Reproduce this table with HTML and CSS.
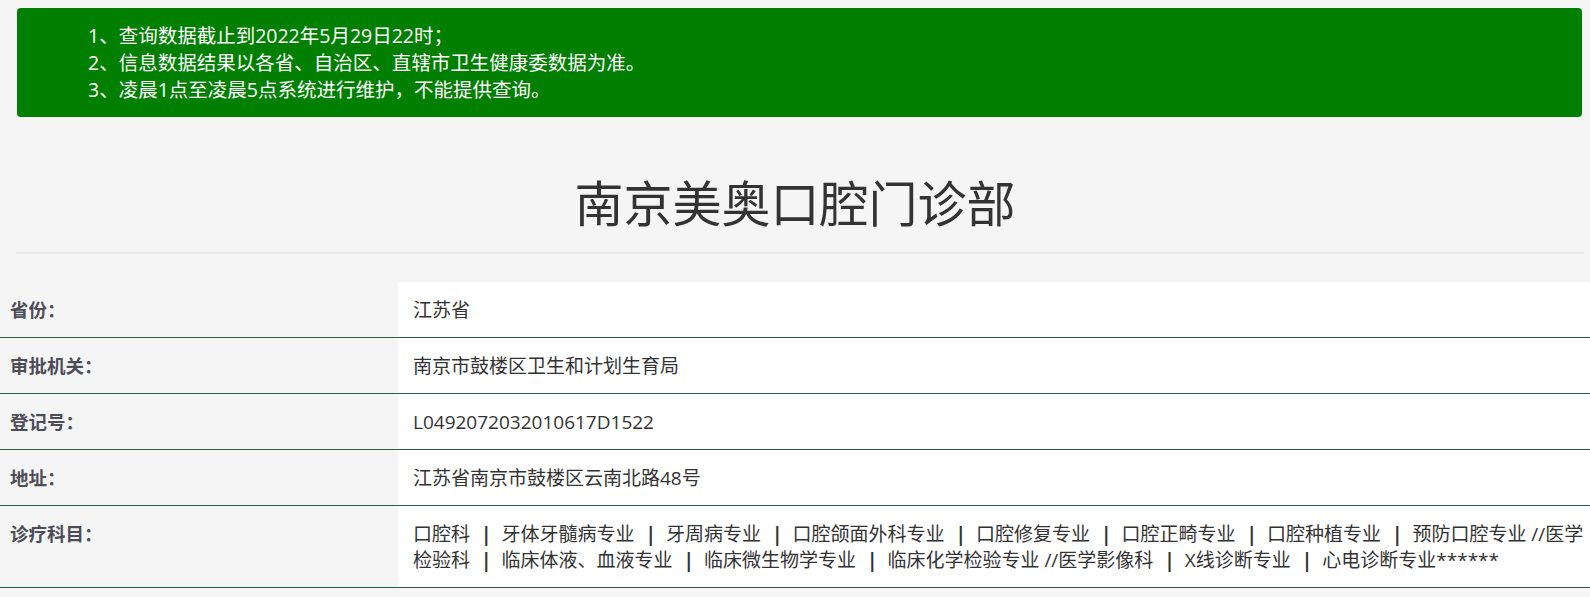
FILE: index.html
```html
<!DOCTYPE html>
<html lang="zh-CN">
<head>
<meta charset="utf-8">
<title>南京美奥口腔门诊部</title>
<link rel="stylesheet" href="styles.css">
</head>
<body>
<div class="notice">
  <div class="notice-line">1、查询数据截止到2022年5月29日22时；</div>
  <div class="notice-line">2、信息数据结果以各省、自治区、直辖市卫生健康委数据为准。</div>
  <div class="notice-line">3、凌晨1点至凌晨5点系统进行维护，不能提供查询。</div>
</div>
<h1 class="title">南京美奥口腔门诊部</h1>
<div class="divider"></div>
<div class="info">
  <div class="row"><div class="label">省份：</div><div class="value">江苏省</div></div>
  <div class="row"><div class="label">审批机关：</div><div class="value">南京市鼓楼区卫生和计划生育局</div></div>
  <div class="row"><div class="label">登记号：</div><div class="value">L0492072032010617D1522</div></div>
  <div class="row"><div class="label">地址：</div><div class="value">江苏省南京市鼓楼区云南北路48号</div></div>
  <div class="row"><div class="label">诊疗科目：</div><div class="value">口腔科<span class="sep">|</span>牙体牙髓病专业<span class="sep">|</span>牙周病专业<span class="sep">|</span>口腔颌面外科专业<span class="sep">|</span>口腔修复专业<span class="sep">|</span>口腔正畸专业<span class="sep">|</span>口腔种植专业<span class="sep">|</span>预防口腔专业 //医学检验科<span class="sep">|</span>临床体液、血液专业<span class="sep">|</span>临床微生物学专业<span class="sep">|</span>临床化学检验专业 //医学影像科<span class="sep">|</span>X线诊断专业<span class="sep">|</span>心电诊断专业******</div></div>
</div>
</body>
</html>
```
FILE: styles.css
```css
html, body {
  margin: 0;
  padding: 0;
}
body {
  background: #f5f5f5;
  font-family: "Open Sans", "Noto Sans CJK SC", sans-serif;
  color: #333;
}
.notice {
  margin: 8px 8px 0 17px;
  padding: 14px 0 14px 71px;
  background: #007f00;
  border-radius: 4px;
  color: #fff;
  font-size: 19.5px;
  line-height: 27px;
}
.title {
  margin: 53px 0 0;
  text-align: center;
  font-size: 49px;
  line-height: 66px;
  font-weight: normal;
  color: #333;
}
.divider {
  margin: 16px 6px 0 16px;
  height: 2px;
  background: #ebebeb;
}
.info {
  margin-top: 28px;
}
.row {
  display: grid;
  grid-template-columns: 398px 1fr;
  border-bottom: 1px solid #245e40;
}
.label {
  padding: 15px 0 14px 10px;
  font-size: 18.5px;
  line-height: 26px;
  font-weight: bold;
  color: #4d4d58;
}
.value {
  background: #fff;
  padding: 15px 6px 14px 15px;
  font-size: 19px;
  line-height: 26px;
  color: #333;
}
.sep {
  display: inline-block;
  margin: 0 10px 0 11px;
  font-weight: bold;
  color: #333;
}
```
